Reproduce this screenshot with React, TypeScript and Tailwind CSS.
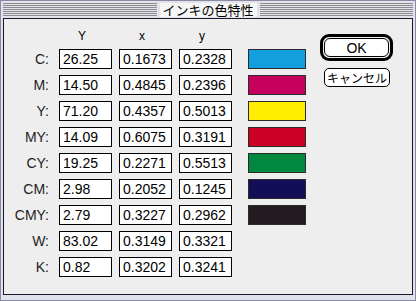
import React from "react";

const rows = [
  { label: "C:", Y: "26.25", x: "0.1673", y: "0.2328", color: "bg-[#139fde]" },
  { label: "M:", Y: "14.50", x: "0.4845", y: "0.2396", color: "bg-[#c6005f]" },
  { label: "Y:", Y: "71.20", x: "0.4357", y: "0.5013", color: "bg-[#ffee00]" },
  { label: "MY:", Y: "14.09", x: "0.6075", y: "0.3191", color: "bg-[#cc0026]" },
  { label: "CY:", Y: "19.25", x: "0.2271", y: "0.5513", color: "bg-[#00883f]" },
  { label: "CM:", Y: "2.98", x: "0.2052", y: "0.1245", color: "bg-[#140e58]" },
  { label: "CMY:", Y: "2.79", x: "0.3227", y: "0.2962", color: "bg-[#221b1f]" },
  { label: "W:", Y: "83.02", x: "0.3149", y: "0.3321" },
  { label: "K:", Y: "0.82", x: "0.3202", y: "0.3241" },
];

// title bar stripes, mac style
function Stripes() {
  return (
    <div className="flex-1 h-[13px] flex flex-col justify-between">
      {[0, 1, 2, 3, 4, 5, 6].map((i) => (
        <div key={i} className="h-px bg-[#8c8c8c]" />
      ))}
    </div>
  );
}

function Field({ value }: { value: string }) {
  return (
    <div className="w-[53px] h-[20px] border border-black bg-white pl-[3px] text-[14px] leading-[18px] text-black">
      {value}
    </div>
  );
}

export default function App() {
  return (
    <div
      className="w-[416px] h-[301px] flex flex-col bg-[#e2e2ec] border border-[#8a8aa2] text-black"
      style={{ fontFamily: '"Liberation Sans", "Noto Sans CJK JP", sans-serif' }}
    >
      {/* title bar */}
      <div className="h-[17px] flex items-start pt-[2px] px-[2px] gap-[3px]">
        <Stripes />
        <div className="h-[14px] bg-[#f6f6f6] px-[3px] text-[13px] leading-[14px] font-['Noto_Sans_CJK_JP',sans-serif]">
          インキの色特性
        </div>
        <Stripes />
      </div>

      {/* content */}
      <div className="flex-1 mx-[2px] mb-[5px] border border-[#181830] bg-[#eeeeee] flex">
        <div className="flex flex-col pt-[10px]">
          <div className="flex h-[14px] text-[12px] leading-[14px]">
            <div className="w-[55px]" />
            <div className="w-[53px] text-center pr-[7px]">Y</div>
            <div className="w-[53px] ml-[7px] text-center pr-[7px]">x</div>
            <div className="w-[53px] ml-[7px] text-center pr-[7px]">y</div>
          </div>
          <div className="flex flex-col gap-[6px] mt-[6px]">
            {rows.map((r) => (
              <div key={r.label} className="flex items-center">
                <div className="w-[45px] text-right text-[14px] leading-[18px] text-[#222]">
                  {r.label}
                </div>
                <div className="ml-[10px]">
                  <Field value={r.Y} />
                </div>
                <div className="ml-[7px]">
                  <Field value={r.x} />
                </div>
                <div className="ml-[7px]">
                  <Field value={r.y} />
                </div>
                {r.color ? (
                  <div className={`ml-[16px] w-[58px] h-[20px] border border-[#2a2a2a] ${r.color}`} />
                ) : (
                  <div className="ml-[16px] w-[58px]" />
                )}
              </div>
            ))}
          </div>
        </div>

        {/* buttons */}
        <div className="flex flex-col ml-[14px] pt-[15px]">
          <div className="w-[73px] h-[27px] border-[3px] border-black rounded-[9px] p-[1px] bg-[#eeeeee]">
            <div className="w-full h-full border border-black rounded-[6px] bg-white flex items-center justify-center text-[14px] leading-none">
              OK
            </div>
          </div>
          <div className="mt-[7px] ml-[4px] w-[66px] h-[19px] border border-black rounded-[5px] bg-white flex items-center justify-center text-[12px] leading-none font-['Noto_Sans_CJK_JP',sans-serif]">
            キャンセル
          </div>
        </div>
      </div>
    </div>
  );
}
